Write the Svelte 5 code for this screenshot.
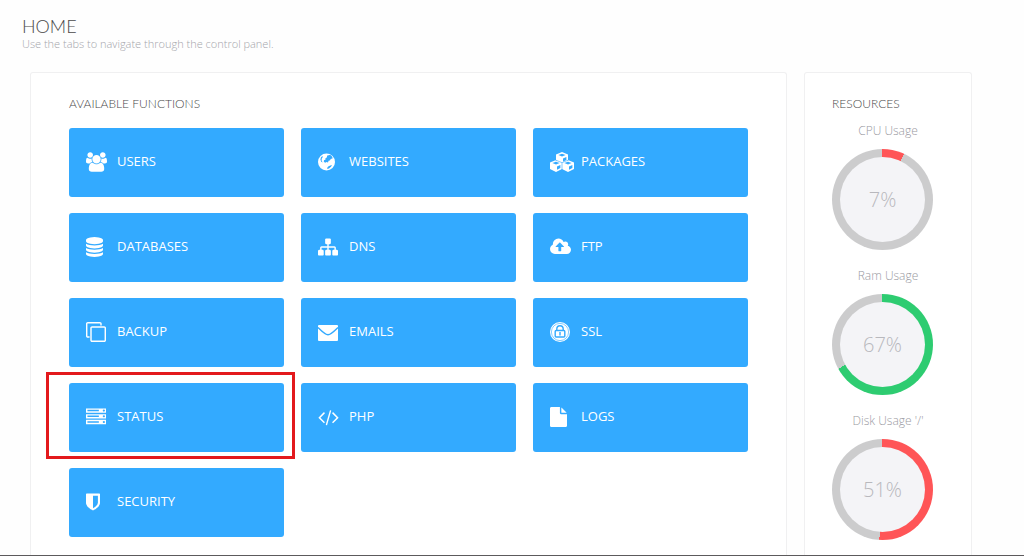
<script>
	const functions = [
		{ name: "USERS", icon: "users" },
		{ name: "WEBSITES", icon: "globe" },
		{ name: "PACKAGES", icon: "cubes" },
		{ name: "DATABASES", icon: "database" },
		{ name: "DNS", icon: "sitemap" },
		{ name: "FTP", icon: "cloud" },
		{ name: "BACKUP", icon: "clone" },
		{ name: "EMAILS", icon: "envelope" },
		{ name: "SSL", icon: "ssl" },
		{ name: "STATUS", icon: "server", marked: true },
		{ name: "PHP", icon: "code" },
		{ name: "LOGS", icon: "file" },
		{ name: "SECURITY", icon: "shield" },
	];

	const resources = [
		{ name: "CPU Usage", value: 7, color: "#ff5557" },
		{ name: "Ram Usage", value: 67, color: "#2ecc71" },
		{ name: "Disk Usage '/'", value: 51, color: "#ff5557" },
	];

	// viewBox and path of the one-piece icons
	const icons = {
		users: {
			box: "-64 0 1920 1792",
			path: "M529 896q-162 5-265 128h-134q-82 0-138-40.5t-56-118.5q0-353 124-353 6 0 43.5 21t97.5 42.5 119 21.5q67 0 133-23-5 37-5 66 0 139 81 256zm1071 637q0 120-73 189.5t-194 69.5h-874q-121 0-194-69.5t-73-189.5q0-53 3.5-103.5t14-109 26.5-108.5 43-97.5 62-81 85.5-53.5 111.5-20q10 0 43 21.5t73 48 107 48 135 21.5 135-21.5 107-48 73-48 43-21.5q61 0 111.5 20t85.5 53.5 62 81 43 97.5 26.5 108.5 14 109 3.5 103.5zm-1024-1277q0 106-75 181t-181 75-181-75-75-181 75-181 181-75 181 75 75 181zm704 384q0 159-112.5 271.5t-271.5 112.5-271.5-112.5-112.5-271.5 112.5-271.5 271.5-112.5 271.5 112.5 112.5 271.5zm576 225q0 78-56 118.5t-138 40.5h-134q-103-123-265-128 81-117 81-256 0-29-5-66 66 23 133 23 59 0 119-21.5t97.5-42.5 43.5-21q124 0 124 353zm-128-609q0 106-75 181t-181 75-181-75-75-181 75-181 181-75 181 75 75 181z",
			width: 21,
		},
		database: {
			box: "128 0 1536 1792",
			path: "M896 768q237 0 443-43t325-127v170q0 69-103 128t-280 93.5-385 34.5-385-34.5-280-93.5-103-128v-170q119 84 325 127t443 43zm0 768q237 0 443-43t325-127v170q0 69-103 128t-280 93.5-385 34.5-385-34.5-280-93.5-103-128v-170q119 84 325 127t443 43zm0-384q237 0 443-43t325-127v170q0 69-103 128t-280 93.5-385 34.5-385-34.5-280-93.5-103-128v-170q119 84 325 127t443 43zm0-1152q208 0 385 34.5t280 93.5 103 128v128q0 69-103 128t-280 93.5-385 34.5-385-34.5-280-93.5-103-128v-128q0-69 103-128t280-93.5 385-34.5z",
			width: 17,
		},
		sitemap: {
			box: "0 0 1792 1792",
			path: "M1792 1248v320q0 40-28 68t-68 28h-320q-40 0-68-28t-28-68v-320q0-40 28-68t68-28h96v-192h-512v192h96q40 0 68 28t28 68v320q0 40-28 68t-68 28h-320q-40 0-68-28t-28-68v-320q0-40 28-68t68-28h96v-192h-512v192h96q40 0 68 28t28 68v320q0 40-28 68t-68 28h-320q-40 0-68-28t-28-68v-320q0-40 28-68t68-28h96v-192q0-52 38-90t90-38h512v-192h-96q-40 0-68-28t-28-68v-320q0-40 28-68t68-28h320q40 0 68 28t28 68v320q0 40-28 68t-68 28h-96v192h512q52 0 90 38t38 90v192h96q40 0 68 28t28 68z",
			width: 20,
		},
		cloud: {
			box: "-64 0 1920 1792",
			path: "M1216 864q0-14-9-23l-352-352q-9-9-23-9t-23 9l-351 351q-10 12-10 24 0 14 9 23t23 9h224v352q0 13 9.5 22.5t22.5 9.5h192q13 0 22.5-9.5t9.5-22.5v-352h224q13 0 22.5-9.5t9.5-22.5zm640 288q0 159-112.5 271.5t-271.5 112.5h-1088q-185 0-316.5-131.5t-131.5-316.5q0-130 70-240t188-165q-2-30-2-43 0-212 150-362t362-150q156 0 285.5 87t188.5 231q71-62 166-62 106 0 181 75t75 181q0 76-41 138 130 31 213.5 135.5t83.5 238.5z",
			width: 21,
		},
		clone: {
			box: "0 0 1792 1792",
			path: "M1664 1632v-1088q0-13-9.5-22.5t-22.5-9.5h-1088q-13 0-22.5 9.5t-9.5 22.5v1088q0 13 9.5 22.5t22.5 9.5h1088q13 0 22.5-9.5t9.5-22.5zm128-1088v1088q0 66-47 113t-113 47h-1088q-66 0-113-47t-47-113v-1088q0-66 47-113t113-47h1088q66 0 113 47t47 113zm-384-384v160h-128v-160q0-13-9.5-22.5t-22.5-9.5h-1088q-13 0-22.5 9.5t-9.5 22.5v1088q0 13 9.5 22.5t22.5 9.5h160v128h-160q-66 0-113-47t-47-113v-1088q0-66 47-113t113-47h1088q66 0 113 47t47 113z",
			width: 20,
		},
		server: {
			box: "0 0 1792 1792",
			path: "M128 1408h1024v-128h-1024v128zm0-512h1024v-128h-1024v128zm1568 448q0-40-28-68t-68-28-68 28-28 68 28 68 68 28 68-28 28-68zm-1568-960h1024v-128h-1024v128zm1568 448q0-40-28-68t-68-28-68 28-28 68 28 68 68 28 68-28 28-68zm0-512q0-40-28-68t-68-28-68 28-28 68 28 68 68 28 68-28 28-68zm96 832v384h-1792v-384h1792zm0-512v384h-1792v-384h1792zm0-512v384h-1792v-384h1792z",
			width: 20,
		},
		code: {
			box: "0 0 1920 1792",
			path: "M617 1399l-50 50q-10 10-23 10t-23-10l-466-466q-10-10-10-23t10-23l466-466q10-10 23-10t23 10l50 50q10 10 10 23t-10 23l-393 393 393 393q10 10 10 23t-10 23zm591-1067l-373 1291q-4 13-15.5 19.5t-23.5 2.5l-62-17q-13-4-19.5-15.5t-2.5-24.5l373-1291q4-13 15.5-19.5t23.5-2.5l62 17q13 4 19.5 15.5t2.5 24.5zm657 651l-466 466q-10 10-23 10t-23-10l-50-50q-10-10-10-23t10-23l393-393-393-393q-10-10-10-23t10-23l50-50q10-10 23-10t23 10l466 466q10 10 10 23t-10 23z",
			width: 21,
		},
		file: {
			box: "128 0 1536 1792",
			path: "M1152 512v-472q22 14 36 28l408 408q14 14 28 36h-472zm-128 32q0 40 28 68t68 28h544v1056q0 40-28 68t-68 28h-1344q-40 0-68-28t-28-68v-1600q0-40 28-68t68-28h800v544z",
			width: 17,
		},
		shield: {
			box: "256 0 1280 1792",
			path: "M1344 960v-640h-448v1137q119-63 213-137 235-184 235-360zm192-768v768q0 86-33.5 170.5t-83 150-118 127.5-126.5 103-121 77.5-89.5 49.5-42.5 20q-12 6-26 6t-26-6q-16-7-42.5-20t-89.5-49.5-121-77.5-126.5-103-118-127.5-83-150-33.5-170.5v-768q0-26 19-45t45-19h1152q26 0 45 19t19 45z",
			width: 14,
		},
	};
</script>

{#snippet cube(x, y)}
	<g transform="translate({x} {y})">
		<path class="solid" d="M6 0L12 2.4V9L6 12L0 9V2.4Z" />
		<path class="cut" d="M6 1.7L9.6 3.1L6 4.6L2.4 3.1Z" />
		<path class="cut" d="M7 6.5L10.4 5.1V8.1L7 9.8Z" />
	</g>
{/snippet}

<div class="page">
	<header>
		<h1>HOME</h1>
		<p>Use the tabs to navigate through the control panel.</p>
	</header>

	<main>
		<section class="panel functions">
			<h2>AVAILABLE FUNCTIONS</h2>
			<ul>
				{#each functions as fn}
					<li class:marked={fn.marked}>
						<a href="#{fn.icon}">
							<span class="icon">
								{#if fn.icon === "globe"}
									<svg width="17" height="20" viewBox="0 0 17 20" aria-hidden="true">
										<circle class="solid" cx="8.5" cy="10" r="8.5" />
										<path class="cut" d="M9.2 3.4L10.6 3.2L12 2.8L13.6 4L14.8 6.2L12.8 7L11.8 8.4L10.6 8.8L10 10.6L8.4 9.9L7.2 10.8L5.8 9.8L6 8.3L7.6 7.6L7.4 6.2L8.8 5.4Z" />
										<path class="cut" d="M3 5.2L4.2 4.2L5 4.8L3.8 6.4L3.6 8.6L4.6 10.6L3.2 9.8L2.4 7.6Z" />
										<path class="cut" d="M10.2 14.4L12.3 13.4L14 13L13 14.8L11 16.4L9.2 17L9.4 15.4Z" />
									</svg>
								{:else if fn.icon === "cubes"}
									<svg width="24" height="20" viewBox="0 0 24 20" aria-hidden="true">
										{@render cube(6, 0)}
										{@render cube(0, 8)}
										{@render cube(12, 8)}
										<path class="seam" d="M6 9.2V8.2L12 10.7L18 8.2V9.2M12 10.7V17.5" />
									</svg>
								{:else if fn.icon === "envelope"}
									<svg width="20" height="20" viewBox="0 0 20 20" aria-hidden="true">
										<rect class="solid" y="3" width="20" height="16" rx="1" />
										<path class="line" d="M0 5.5C3 8.5 8 12.8 10 12.8S17 8.5 20 5.5" />
									</svg>
								{:else if fn.icon === "ssl"}
									<svg width="20" height="20" viewBox="0 0 20 20" aria-hidden="true">
										<circle class="solid" cx="10" cy="10" r="10" />
										<circle class="line thin" cx="10" cy="10" r="8.6" />
										<path class="line" d="M6.8 8.5V7A3.2 3.2 0 0 1 13.2 7V8.5" />
										<rect class="line" x="5.2" y="8.5" width="9.6" height="6.5" rx="1" />
										<path class="line" d="M10 10V13.4" />
									</svg>
								{:else}
									<svg width={icons[fn.icon].width} height="20" viewBox={icons[fn.icon].box} aria-hidden="true">
										<path class="solid" d={icons[fn.icon].path} />
									</svg>
								{/if}
							</span>
							{fn.name}
						</a>
					</li>
				{/each}
			</ul>
		</section>

		<section class="panel resources">
			<h2>RESOURCES</h2>
			{#each resources as res}
				<h3>{res.name}</h3>
				<div
					class="gauge"
					style="background: conic-gradient({res.color} {res.value}%, #cccccd 0)"
				>
					<span>{res.value}%</span>
				</div>
			{/each}
		</section>
	</main>
</div>

<style>
	:global(body) {
		margin: 0;
		background: #fefefe;
	}

	.page {
		box-sizing: border-box;
		height: 100vh;
		overflow: hidden;
		display: flex;
		flex-direction: column;
		border-bottom: 1px solid #5c5a5c;
		font-family: "Open Sans", "Noto Sans", sans-serif;
	}

	header {
		flex: none;
		padding: 14px 22px 22px;
	}

	h1, h2, h3, p, ul {
		margin: 0;
		padding: 0;
	}

	h1, h2, h3, p {
		font-weight: 300;
	}

	h1, h2 {
		font-family: Lato, "Open Sans", sans-serif;
		color: #4a4a4a;
	}

	h1 {
		font-size: 18px;
		line-height: 24px;
	}

	header p {
		font-size: 11px;
		line-height: 12px;
		color: #a4a5ab;
	}

	main {
		flex: 1;
		display: flex;
		gap: 17px;
		padding: 0 52px 0 30px;
	}

	.panel {
		box-sizing: border-box;
		border: 1px solid #f0f0f1;
		border-bottom: 0;
		border-radius: 3px 3px 0 0;
		background: #fff;
	}

	.functions {
		flex: 1;
		padding: 22px 38px 0;
	}

	.resources {
		width: 168px;
		padding: 22px 27px 0;
	}

	h2 {
		font-size: 12px;
		line-height: 18px;
		white-space: nowrap;
	}

	ul {
		display: grid;
		grid-template-columns: repeat(3, 1fr);
		gap: 16px 17px;
		margin-top: 15px;
		list-style: none;
	}

	li {
		position: relative;
	}

	/* red frame around the highlighted tile */
	.marked::after {
		content: "";
		position: absolute;
		inset: -11px -11px -7px -23px;
		border: 3px solid #e3191d;
		pointer-events: none;
	}

	a {
		display: flex;
		align-items: center;
		box-sizing: border-box;
		height: 69px;
		padding: 0 17px 4px;
		border-radius: 3px;
		background: #33aaff;
		color: #fff;
		font-size: 13px;
		line-height: 18px;
		text-decoration: none;
	}

	.icon {
		display: flex;
		width: 31px;
		padding-top: 2px;
	}

	svg {
		display: block;
	}

	.solid {
		fill: #fff;
	}

	.cut {
		fill: #33aaff;
	}

	.line,
	.seam {
		fill: none;
		stroke: #33aaff;
		stroke-width: 1.4;
	}

	.thin,
	.seam {
		stroke-width: 0.6;
	}

	h3 {
		font-size: 12px;
		line-height: 18px;
		text-align: center;
		white-space: nowrap;
		color: #9a9aa2;
	}

	h2 + h3 {
		margin-top: 9px;
	}

	.gauge {
		display: flex;
		width: 101px;
		height: 101px;
		margin: 9px 0 17px;
		border-radius: 50%;
	}

	.gauge span {
		flex: 1;
		margin: 8px;
		border-radius: 50%;
		background: #f4f4f7;
		color: #b8b8bd;
		font-size: 20px;
		font-weight: 300;
		line-height: 85px;
		text-align: center;
	}
</style>
